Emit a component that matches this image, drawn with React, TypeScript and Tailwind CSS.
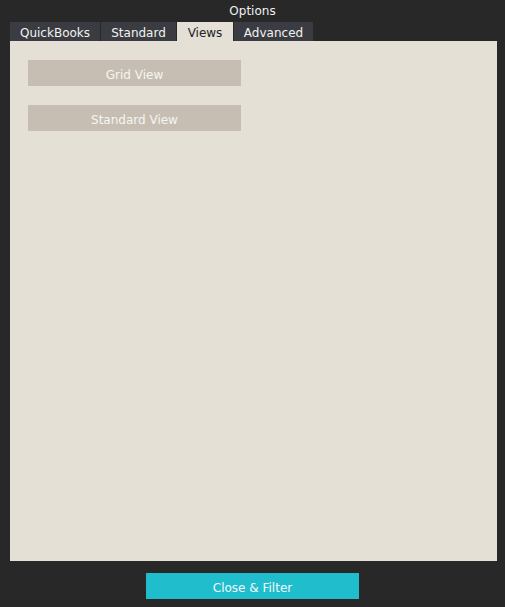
const TABS = [
  { label: 'QuickBooks', w: 'w-[90px]' },
  { label: 'Standard', w: 'w-[75px]' },
  { label: 'Views', w: 'w-[56px]' },
  { label: 'Advanced', w: 'w-[79px]' },
];

export default function App() {
  const active = 'Views';

  return (
    <div className="h-[607px] w-[505px] bg-[#282828] text-[12px] font-['DejaVu_Sans',sans-serif] flex flex-col">
      {/* Title */}
      <div className="h-[22px] flex items-center justify-center text-[#f0f0f0] leading-none">Options</div>

      {/* Tabs */}
      <div className="flex gap-px pl-[10px] h-[19px]">
        {TABS.map(({ label, w }) => (
          <div
            key={label}
            className={`${w} flex items-center justify-center leading-none pt-[2px] ${
              label === active ? 'bg-[#e5e0d6] text-[#222]' : 'bg-[#3b3c41] text-[#f2f2f2]'
            }`}
          >
            {label}
          </div>
        ))}
      </div>

      {/* Panel */}
      <div className="ml-[10px] w-[487px] h-[520px] bg-[#e5e0d6] pl-[18px] pt-[19px] flex flex-col gap-[19px]">
        <button className="w-[213px] h-[26px] bg-[#c6beb2] text-[#f7f5f0] flex items-center justify-center pt-[3px] leading-none">Grid View</button>
        <button className="w-[213px] h-[26px] bg-[#c6beb2] text-[#f7f5f0] flex items-center justify-center pt-[3px] leading-none">Standard View</button>
      </div>

      {/* Footer */}
      <div className="flex justify-center pt-[12px]">
        <button className="w-[213px] h-[26px] bg-[#20bdcd] text-[#f2fbfc] flex items-center justify-center pt-[3px] leading-none">Close &amp; Filter</button>
      </div>
    </div>
  );
}
